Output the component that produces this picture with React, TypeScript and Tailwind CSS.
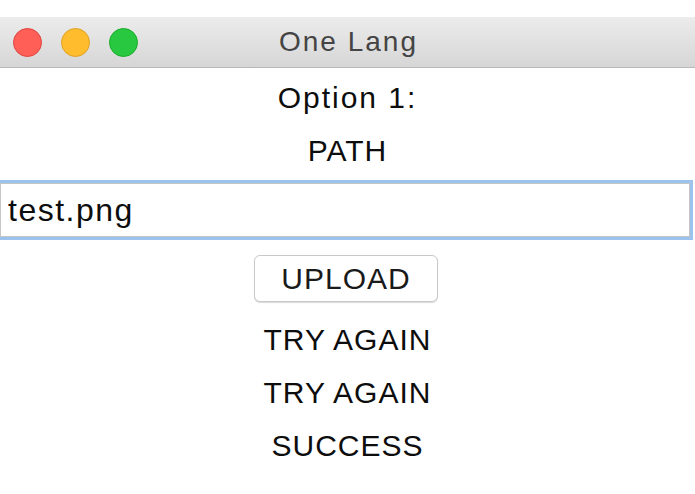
import React from "react";

function Row({ children, wide }: { children: React.ReactNode; wide?: boolean }) {
  return (
    <div
      className={`flex h-[53px] items-center justify-center text-[30px] text-[#0d0d0d] ${
        wide ? "tracking-[2px]" : "tracking-[1px]"
      }`}
    >
      {children}
    </div>
  );
}

export default function App() {
  return (
    <div className="h-[494px] w-[695px] overflow-hidden bg-white font-['Liberation_Sans',Arial,sans-serif]">
      <div className="h-[17px] bg-white" />
      {/* title bar */}
      <div className="relative flex h-[51px] items-center border-b border-[#b8b8b8] bg-gradient-to-b from-[#ececec] to-[#d6d6d6]">
        <div className="flex items-center gap-[19px] pl-[13px]">
          <span className="h-[29px] w-[29px] rounded-full border border-[#e0443e] bg-[#ff5f57]" />
          <span className="h-[29px] w-[29px] rounded-full border border-[#dea123] bg-[#ffbd2e]" />
          <span className="h-[29px] w-[29px] rounded-full border border-[#1aab29] bg-[#28c940]" />
        </div>
        <div className="absolute inset-0 flex items-center justify-center pl-[2px] text-[28px] tracking-[2px] text-[#444]">
          One Lang
        </div>
      </div>

      <div className="pt-[3px]">
        <Row wide>Option 1:</Row>
        <Row>PATH</Row>
      </div>

      <div className="mt-[3px] -ml-[3px] h-[60px] w-[696px] border-[3px] border-[#9cc2ee] bg-white">
        <div className="flex h-full items-center border border-[#c5c5c5] pl-[7px] text-[32px] tracking-[1.5px] text-[#0d0d0d]">
          test.png
        </div>
      </div>

      <div className="mt-[15px] flex justify-center">
        <button
          type="button"
          className="-ml-[3px] flex h-[47px] w-[184px] items-center justify-center rounded-[6px] border border-[#c9c9c9] bg-white text-[30px] tracking-[1px] text-[#1a1a1a] shadow-[0_1px_1px_rgba(0,0,0,0.15)]"
        >
          UPLOAD
        </button>
      </div>

      <div className="mt-[11px]">
        <Row>TRY AGAIN</Row>
        <Row>TRY AGAIN</Row>
        <Row>SUCCESS</Row>
      </div>
    </div>
  );
}
